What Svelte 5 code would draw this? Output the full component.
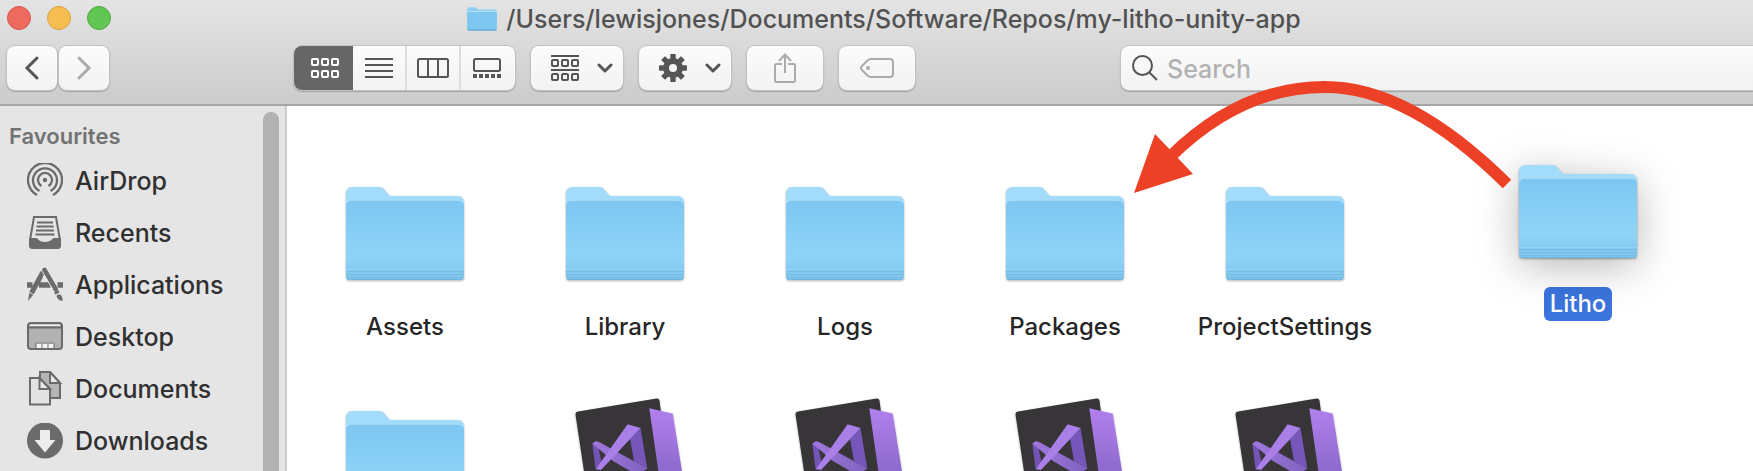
<script>
  const path = '/Users/lewisjones/Documents/Software/Repos/my-litho-unity-app';
  const places = ['AirDrop', 'Recents', 'Applications', 'Desktop', 'Documents', 'Downloads'];
  const files = [
    { name: 'Assets', kind: 'folder' },
    { name: 'Library', kind: 'folder' },
    { name: 'Logs', kind: 'folder' },
    { name: 'Packages', kind: 'folder' },
    { name: 'ProjectSettings', kind: 'folder' },
    { name: '', kind: 'folder' },
    { name: '', kind: 'project' },
    { name: '', kind: 'project' },
    { name: '', kind: 'project' },
    { name: '', kind: 'project' }
  ];
  const cells = [0, 10, 20];
  const teeth = [0, 45, 90, 135, 180, 225, 270, 315];
  let view = $state('icons');
  let query = $state('');
</script>

{#snippet folder()}
  <svg class="art" viewBox="0 0 128 128" aria-hidden="true">
    <path d="M5 24a6 6 0 0 1 6-6h27c3 0 4 1 6 3l3 4c1 1 2 2 4 2h66a6 6 0 0 1 6 6v70H5z" fill="url(#tab)" />
    <path d="M5 37a5 5 0 0 1 5-5h108a5 5 0 0 1 5 5v70a4 4 0 0 1-4 4H9a4 4 0 0 1-4-4z" fill="url(#front)" />
    <path d="M5 100.500h118" stroke="#92d2f4" />
    <path d="M5 102.500h118M5 105.500h118M5 108.500h118" stroke="#6db5e2" opacity=".55" />
    <path d="M6 110.500h116" stroke="#64aedb" opacity=".6" />
  </svg>
{/snippet}

{#snippet project()}
  <svg class="art" viewBox="0 0 128 128" aria-hidden="true">
    <path d="M17 18.500 95.500 5.600q2.500-.4 3 2L112 110 30 125 14.500 21.500q-.4-2.600 2.500-3z" fill="#383538" />
    <path d="M88.300 15.300 111.700 20.500 127 116 104 124z" fill="url(#spine)" />
    <path d="M31.300 50.500 37 53l4 18-6.500 5z" fill="#7353b3" />
    <path d="M79.500 35 86.300 76 73 68 69 46z" fill="#7656bb" />
    <path d="M31.300 50.500 35 48l4 1.500 47.300 26L76 82 52 68z" fill="url(#band)" />
    <path d="M34.700 76.300 66.600 31.300 79.500 35 40 77z" fill="#aa80e8" />
  </svg>
{/snippet}

{#snippet squares(y)}
  {#each cells as x}
    <rect x={x + 1} y={y + 1} width="6" height="6" rx="1" />
  {/each}
{/snippet}

{#snippet chevron()}
  <svg class="line" width="16" height="10" viewBox="0 0 16 10" aria-hidden="true"><path d="m2 2 6 6 6-6" stroke-width="3" stroke-linecap="round" stroke-linejoin="round" /></svg>
{/snippet}

<svg class="defs" aria-hidden="true">
  <defs>
    <linearGradient id="tab" x1="0" y1="0" x2="0" y2="1">
      <stop offset="0" stop-color="#a3dcfb" /><stop offset="1" stop-color="#a0d9fa" />
    </linearGradient>
    <linearGradient id="front" x1="0" y1="0" x2="0" y2="1">
      <stop offset="0" stop-color="#7cc6f1" /><stop offset=".68" stop-color="#8fd4f8" /><stop offset="1" stop-color="#7fc3ec" />
    </linearGradient>
    <linearGradient id="spine" x1="0" y1="0" x2="0" y2="1">
      <stop offset="0" stop-color="#b180ee" /><stop offset=".6" stop-color="#8c69cb" /><stop offset="1" stop-color="#7556b0" />
    </linearGradient>
    <linearGradient id="band" x1="0" y1="0" x2="1" y2="0">
      <stop offset="0" stop-color="#a078dd" /><stop offset="1" stop-color="#8062c0" />
    </linearGradient>
  </defs>
</svg>

<div class="window">
  <header>
    <div class="titlebar">
      <div class="lights">
        <button class="light close" aria-label="Close"></button>
        <button class="light minimise" aria-label="Minimise"></button>
        <button class="light zoom" aria-label="Zoom"></button>
      </div>
      <h1>
        <svg width="30" height="24" viewBox="4 17 120 96" preserveAspectRatio="none" aria-hidden="true">
          <path d="M5 24a6 6 0 0 1 6-6h27c6 0 6 9 13 9h66a6 6 0 0 1 6 6v70H5z" fill="#8fcff2" />
          <path d="M5 37h118v70a4 4 0 0 1-4 4H9a4 4 0 0 1-4-4z" fill="#7dc7f0" />
          <path d="M5 35h118" stroke="#b4e2fa" stroke-width="4" />
          <path d="M6 109h116" stroke="#66a9d1" stroke-width="5" />
        </svg>
        <span>{path}</span>
      </h1>
      <div></div>
    </div>

    <div class="toolbar">
      <div class="history">
        <button class="btn nav" aria-label="Back"><svg class="line" width="16" height="26" viewBox="0 0 16 26"><path d="M13 3 3 13l10 10" stroke-width="3" stroke-linecap="round" /></svg></button>
        <button class="btn nav faint" aria-label="Forward"><svg class="line" width="16" height="26" viewBox="0 0 16 26"><path d="m3 3 10 10L3 23" stroke-width="3" stroke-linecap="round" /></svg></button>
      </div>

      <div class="views">
        <button class:on={view === 'icons'} onclick={() => (view = 'icons')} aria-label="Icons">
          <svg class="line" width="28" height="20" viewBox="0 0 28 20">{@render squares(0)}{@render squares(12)}</svg>
        </button>
        <button class:on={view === 'list'} onclick={() => (view = 'list')} aria-label="List">
          <svg class="line" width="28" height="20" viewBox="0 0 28 20"><path d="M0 1h28M0 7h28M0 13h28M0 19h28" /></svg>
        </button>
        <button class:on={view === 'columns'} onclick={() => (view = 'columns')} aria-label="Columns">
          <svg class="line" width="32" height="20" viewBox="0 0 32 20"><rect x="1" y="1" width="30" height="18" rx="1.500" /><path d="M11 1v18M21 1v18" /></svg>
        </button>
        <button class:on={view === 'gallery'} onclick={() => (view = 'gallery')} aria-label="Gallery">
          <svg class="line" width="28" height="20" viewBox="0 0 28 20"><rect x="1" y="1" width="26" height="12" rx="1.500" /><path d="M0 18h28" stroke-width="4" stroke-dasharray="4 2" /></svg>
        </button>
      </div>

      <button class="btn menu" aria-label="Group">
        <svg class="line" width="28" height="26" viewBox="0 0 28 26"><path d="M0 1h28M0 15h28" />{@render squares(4)}{@render squares(18)}</svg>
        {@render chevron()}
      </button>
      <button class="btn menu" aria-label="Action">
        <svg width="28" height="28" viewBox="-14 -14 28 28">
          <circle r="7" fill="none" stroke="#555" stroke-width="6" />
          {#each teeth as angle}
            <rect x="-2.700" y="-14" width="5.400" height="6" rx=".6" fill="#555" transform="rotate({angle})" />
          {/each}
        </svg>
        {@render chevron()}
      </button>
      <button class="btn single faint" aria-label="Share">
        <svg class="line" width="24" height="30" viewBox="0 0 24 30"><path d="M9 11H3.500Q2 11 2 12.500v15Q2 29 3.500 29h17q1.500 0 1.500-1.500v-15Q22 11 20.500 11H15M12 20V2M6 8l6-6.500L18 8" /></svg>
      </button>
      <button class="btn single faint" aria-label="Tags">
        <svg class="line" width="34" height="20" viewBox="0 0 34 20"><path d="M11 1h19q3 0 3 3v12q0 3-3 3H11q-2 0-3.500-1.500L2 12q-2-2 0-4l5.500-5.500Q9 1 11 1z" /><circle cx="8" cy="10" r="1" /></svg>
      </button>

      <label class="search">
        <svg class="line" width="26" height="26" viewBox="0 0 26 26" aria-hidden="true"><circle cx="10.500" cy="10.500" r="9.500" /><path d="m17.500 17.500 7.500 7.500" /></svg>
        <input type="text" placeholder="Search" aria-label="Search" bind:value={query} />
      </label>
    </div>
  </header>

  <div class="body">
    <aside>
      <nav>
        <h2>Favourites</h2>
        {#each places as place}
          <a href="#{place}">
            <svg class="place" width="36" height="36" viewBox="0 0 36 36" aria-hidden="true">
              {#if place === 'AirDrop'}
                <path d="M10 32a17 17 0 1 1 16 0M12.500 28a12 12 0 1 1 11 0M14.500 23a7 7 0 1 1 7 0" stroke-width="2.300" />
                <circle cx="18" cy="17" r="2.200" fill="#6b6b6b" stroke="none" />
              {:else if place === 'Recents'}
                <path d="M7 2h22l4 23v5q0 3-3 3H6q-3 0-3-3v-5z" />
                <path d="M3 24h6c1.500 0 1.500 4 9 4s7.500-4 9-4h6v6q0 3-3 3H6q-3 0-3-3z" fill="#6b6b6b" />
                <path d="M10 7.500h16M9.500 11.500h17M9 15.500h18M8.500 19.500h19" />
              {:else if place === 'Applications'}
                <path d="M0 18h5.500M12 18h11.500M30.500 18H36" stroke-width="5.500" />
                <path d="M13.800 9 4.500 26" stroke-width="5" />
                <path d="M15 6.500l-.5 1" stroke-width="5" stroke-linecap="round" />
                <path d="m2.200 25.800 4 2.200L1 34z" fill="#6b6b6b" stroke="none" />
                <path d="m17.500 3 11 19" stroke-width="4.600" stroke-linecap="round" />
                <path d="m29 24 1.500 2.500" stroke-width="4.600" />
                <path d="M29.500 29c3-3.500 6.500-.5 6 5-3-.5-5.500-2-6-5z" fill="#6b6b6b" stroke="none" />
                <path d="m15 4 10.500 18" stroke="#e5e5e5" stroke-width="1" />
              {:else if place === 'Desktop'}
                <rect x="1" y="4" width="34" height="26" rx="3" fill="#b2b2b3" />
                <path d="M3 5.500h30V7H3z" fill="#eee" stroke="none" />
                <path d="M1 8.500h34" />
                <path d="M8.500 29v-5h19v5" stroke="#8a8a8a" stroke-width="1" />
                <path d="M10 25h4v4h-4zM16 25h4v4h-4zM22 25h4v4h-4z" fill="#f2f2f2" stroke="none" />
              {:else if place === 'Documents'}
                <path d="M13 1h10l10 11v15H13z" fill="#b4b4b5" />
                <path d="M23 1v11h10z" fill="#e8e8e8" />
                <path d="M3 7h9.500L23 18v15.500H3z" fill="#e2e2e2" />
                <path d="M12.500 7v11H23z" fill="#e8e8e8" />
              {:else}
                <circle cx="18" cy="17.500" r="18" fill="#6b6b6b" stroke="none" />
                <path d="M13 7h10v10h5.500L18 29.500 7.500 17H13z" fill="#ececec" stroke="none" />
              {/if}
            </svg>
            <span>{place}</span>
          </a>
        {/each}
      </nav>
      <div class="scroll"></div>
    </aside>

    <main>
      <ul>
        {#each files as file}
          <li>
            {#if file.kind === 'folder'}{@render folder()}{:else}{@render project()}{/if}
            <span>{file.name}</span>
          </li>
        {/each}
      </ul>
      <figure class="dragged">
        {@render folder()}
        <figcaption>Litho</figcaption>
      </figure>
    </main>
  </div>

  <svg class="arrow" width="390" height="130" viewBox="1130 75 390 130" aria-hidden="true">
    <path d="M1507 184Q1409 87 1325 87T1170 157" />
    <path d="m1134 193 21-59 38 40z" class="head" />
  </svg>
</div>

<style>
  :global(body) {
    margin: 0;
    overflow: hidden;
    background: #fff;
  }
  .defs {
    position: absolute;
    width: 0;
    height: 0;
  }
  .window {
    position: relative;
    display: flex;
    flex-direction: column;
    height: 100vh;
    margin-right: -15px;
    overflow: hidden;
    font-family: Inter, 'Liberation Sans', sans-serif;
    font-weight: 500;
    color: #262626;
  }
  .window *,
  .window {
    box-sizing: border-box;
  }
  header {
    flex: none;
    padding-bottom: 14px;
    background: linear-gradient(#e4e4e4, #cbcbcb);
    border-bottom: 2px solid #a6a6a6;
  }
  .titlebar {
    display: grid;
    grid-template-columns: 1fr auto 1fr;
    align-items: center;
    height: 36px;
  }
  .lights {
    display: flex;
    gap: 16px;
    padding-left: 7px;
  }
  .light {
    width: 24px;
    height: 24px;
    padding: 0;
    border: 1px solid;
    border-radius: 50%;
  }
  .close {
    background: #ed6a5f;
    border-color: #d8564c;
  }
  .minimise {
    background: #f6be50;
    border-color: #d9a23f;
  }
  .zoom {
    background: #62c655;
    border-color: #50a73f;
  }
  h1 {
    display: flex;
    align-items: center;
    gap: 9px;
    margin: 0;
    padding-top: 2px;
    font-size: 25px;
    font-weight: 500;
    line-height: 32px;
    color: #525252;
    white-space: nowrap;
  }
  .toolbar {
    display: flex;
    gap: 16px;
    padding: 10px 8px 0 7px;
  }
  button {
    font: inherit;
  }
  .history {
    display: flex;
    gap: 2px;
    margin-right: 169px;
  }
  .btn,
  .views,
  .search {
    height: 44px;
    border: 0;
    border-radius: 8px;
    background: linear-gradient(#fcfcfc, #f2f2f2);
    box-shadow: 0 0 0 1px #c2c2c2, 0 1px 1px 1px #a4a4a4;
  }
  .btn {
    display: flex;
    align-items: center;
    justify-content: center;
    flex: none;
    padding: 0;
  }
  .nav {
    width: 50px;
  }
  .menu {
    gap: 18px;
    width: 92px;
    padding-left: 10px;
  }
  .single {
    width: 76px;
  }
  .views {
    display: flex;
    flex: none;
    overflow: hidden;
  }
  .views button {
    display: flex;
    align-items: center;
    justify-content: center;
    width: 54px;
    padding: 0;
    border: 0;
    border-left: 2px solid #ddd;
    background: none;
  }
  .views button:first-child {
    width: 59px;
    padding-left: 3px;
    border: 0;
  }
  .views button:nth-child(2) {
    width: 52px;
    border: 0;
  }
  .views button:last-child {
    width: 56px;
    padding-right: 2px;
  }
  .views .on {
    background: #666;
  }
  .line {
    fill: none;
    stroke: #555;
    stroke-width: 2;
  }
  .on .line {
    stroke: #fff;
  }
  .faint .line {
    stroke: #ababab;
  }
  .search {
    display: flex;
    flex: 1;
    align-items: center;
    gap: 9px;
    margin-left: 190px;
    padding-left: 11px;
  }
  input {
    flex: 1;
    min-width: 0;
    padding: 2px 0 0;
    border: 0;
    outline: 0;
    background: none;
    font: 500 25px/32px Inter, 'Liberation Sans', sans-serif;
    color: #333;
  }
  input::placeholder {
    color: #b2b2b2;
    opacity: 1;
  }
  .body {
    display: flex;
    flex: 1;
    min-height: 0;
  }
  aside {
    display: flex;
    flex: none;
    width: 287px;
    overflow: hidden;
    background: #e5e5e5;
    border-right: 2px solid #cdcdcd;
  }
  nav {
    flex: 1;
    padding-top: 14px;
  }
  h2 {
    margin: 0 0 3px;
    padding-left: 9px;
    font-size: 22px;
    font-weight: 600;
    line-height: 32px;
    color: #727272;
  }
  a {
    display: flex;
    align-items: center;
    gap: 12px;
    height: 52px;
    padding-left: 27px;
    font-size: 25px;
    line-height: 32px;
    color: #303030;
    text-decoration: none;
  }
  .place {
    flex: none;
    fill: none;
    stroke: #6b6b6b;
    stroke-width: 2;
  }
  .scroll {
    width: 16px;
    margin: 6px 6px -10px 0;
    border-radius: 8px;
    background: #b2b2b2;
  }
  main {
    position: relative;
    flex: 1;
    overflow: hidden;
    background: #fff;
  }
  ul {
    display: grid;
    grid-template-columns: repeat(5, 220px);
    grid-auto-rows: 224px;
    margin: 0;
    padding: 63px 8px 0;
    list-style: none;
  }
  li,
  .dragged {
    display: flex;
    flex-direction: column;
    align-items: center;
    gap: 14px;
    font-size: 24px;
    line-height: 32px;
  }
  .art {
    width: 128px;
    height: 128px;
    filter: drop-shadow(0 1px 1px rgba(0, 0, 0, 0.3));
  }
  .dragged {
    position: absolute;
    top: 41px;
    left: 1227px;
    gap: 12px;
    margin: 0;
  }
  .dragged .art {
    filter: drop-shadow(0 1px 1px rgba(0, 0, 0, 0.35)) drop-shadow(0 8px 20px rgba(0, 0, 0, 0.28));
  }
  figcaption {
    padding: 1px 6px;
    border-radius: 6px;
    background: #3a74dc;
    color: #fff;
  }
  .arrow {
    position: absolute;
    top: 75px;
    left: 1130px;
    fill: none;
    stroke: #ec4126;
    stroke-width: 12;
  }
  .head {
    fill: #ec4126;
    stroke: none;
  }
</style>
